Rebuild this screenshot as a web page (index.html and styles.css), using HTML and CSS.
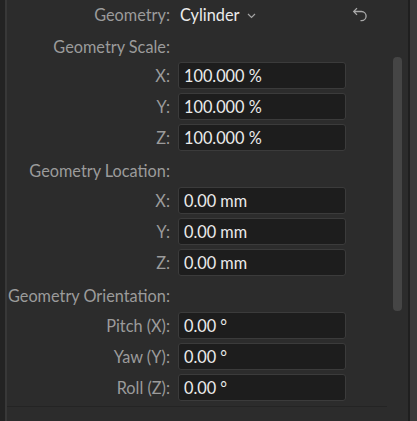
FILE: index.html
```html
<!DOCTYPE html>
<html lang="en">
<head>
    <meta charset="UTF-8">
    <meta name="viewport" content="width=device-width, initial-scale=1.0">
    <title>Geometry</title>
    <link rel="stylesheet" href="styles.css">
</head>
<body>
<div class="window">
    <div class="side-left"></div>
    <div class="panel">
        <div class="props">
            <div class="row row-top">
                <div class="label">Geometry:</div>
                <div class="dropdown">Cylinder
                    <svg class="chevron" width="9" height="6" viewBox="0 0 9 6"><path d="M1 1 L4.5 4.5 L8 1" fill="none" stroke="#a3a3a3" stroke-width="1.2"/></svg>
                </div>
                <div class="reset">
                    <svg width="18" height="20" viewBox="0 0 18 20"><path d="M2 6.5 H9.5 A4.6 4.6 0 0 1 9.5 15.7 H8.5" fill="none" stroke="#aaaaaa" stroke-width="1.3"/><path d="M5 3.1 L1.7 6.5 L5 9.9" fill="none" stroke="#aaaaaa" stroke-width="1.3"/></svg>
                </div>
            </div>

            <div class="row head head-first"><div class="label">Geometry Scale:</div></div>
            <div class="row"><div class="label">X:</div><div class="field">100.000 %</div></div>
            <div class="row"><div class="label">Y:</div><div class="field">100.000 %</div></div>
            <div class="row"><div class="label">Z:</div><div class="field">100.000 %</div></div>

            <div class="row head"><div class="label">Geometry Location:</div></div>
            <div class="row"><div class="label">X:</div><div class="field">0.00 mm</div></div>
            <div class="row"><div class="label">Y:</div><div class="field">0.00 mm</div></div>
            <div class="row"><div class="label">Z:</div><div class="field">0.00 mm</div></div>

            <div class="row head"><div class="label">Geometry Orientation:</div></div>
            <div class="row"><div class="label">Pitch (X):</div><div class="field">0.00 °</div></div>
            <div class="row"><div class="label">Yaw (Y):</div><div class="field">0.00 °</div></div>
            <div class="row"><div class="label">Roll (Z):</div><div class="field">0.00 °</div></div>
        </div>
        <div class="panel-foot"></div>
    </div>
    <div class="scroll"><div class="thumb"></div></div>
    <div class="side-right"></div>
</div>
</body>
</html>
```

FILE: styles.css
```css
body {
    margin: 0;
    padding: 0;
    background-color: #2c2c2c;
    font-family: 'Lato', 'Open Sans', sans-serif;
    font-size: 16.3px;
    color: #9b9b9b;
}

.window {
    display: flex;
    height: 421px;
    width: 417px;
    overflow: hidden;
}

.side-left {
    width: 5px;
    background-color: #232323;
    border-right: 2px solid #383838;
}

.panel {
    width: 380px;
    display: flex;
    flex-direction: column;
}

.props {
    display: flex;
    flex-direction: column;
}

.row {
    display: grid;
    grid-template-columns: 163px 168px 1fr;
    column-gap: 8px;
    align-items: center;
    height: 31px;
}

.row-top {
    height: 30px;
}

.head {
    height: 32px;
}

.head-first {
    height: 30px;
}

.label {
    text-align: right;
    white-space: nowrap;
}

.row-top .label,
.row-top .dropdown {
    margin-top: -1px;
}

.head .label {
    padding-top: 2px;
}

.dropdown {
    color: #ebebeb;
    padding-left: 2px;
    display: flex;
    align-items: center;
    gap: 8px;
}

.chevron {
    margin-top: 2px;
}

.reset {
    display: flex;
    align-items: center;
    margin-left: -2px;
    margin-top: -1px;
}

.field {
    height: 25px;
    line-height: 25px;
    background-color: #1d1d1d;
    border: 1px solid #3b3b3b;
    border-radius: 3px;
    padding-left: 5px;
    color: #ebebeb;
}

.panel-foot {
    margin-top: 3px;
    height: 1px;
    background-color: #242424;
}

.scroll {
    width: 15px;
    padding-left: 6px;
    padding-top: 57px;
}

.thumb {
    width: 9px;
    height: 254px;
    border-radius: 4px;
    background-color: #454545;
}

.side-right {
    width: 7px;
    background-color: #3a3a3a;
    border-left: 2px solid #1f1f1f;
}
```
